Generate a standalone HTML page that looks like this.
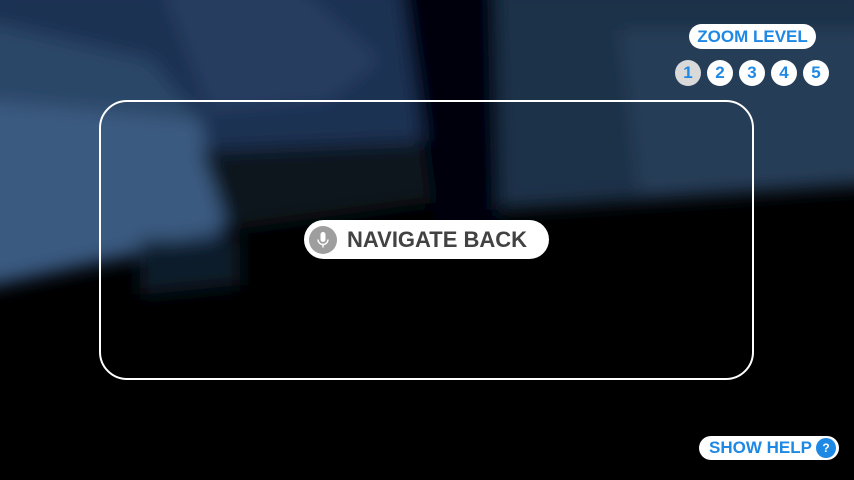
<!DOCTYPE html>
<html><head><style>
html,body{margin:0;padding:0;width:854px;height:480px;overflow:hidden;background:#000;font-family:"Liberation Sans",sans-serif}
.bg{position:absolute;left:0;top:0}
.pill{position:absolute;background:#fff;border-radius:14px;color:#1e88e5;font-weight:bold;box-sizing:border-box;white-space:nowrap}
.num{position:absolute;top:60px;width:26px;height:26px;border-radius:50%;background:#fff;color:#1e88e5;font-size:17px;line-height:26px;text-align:center;font-weight:bold}
</style></head><body>
<svg class="bg" width="854" height="480" viewBox="0 0 854 480">
<defs><filter id="b" x="-20%" y="-20%" width="140%" height="140%"><feGaussianBlur stdDeviation="9"/></filter></defs>
<rect width="854" height="480" fill="#000"/>
<g filter="url(#b)">
<polygon points="-20,-20 420,-20 430,140 260,160 220,240 -20,290" fill="#1d3352"/>
<polygon points="-20,90 200,120 225,230 -20,285" fill="#3a5a80"/>
<polygon points="-20,20 150,60 200,120 -20,100" fill="#2b4668"/>
<polygon points="160,-20 290,-20 380,60 330,100 210,110" fill="#253e60"/>
<polygon points="495,-20 874,-20 874,185 500,210" fill="#1f3149"/>
<polygon points="620,30 874,30 874,180 640,195" fill="#283c58"/>
<polygon points="200,150 440,140 450,200 230,230" fill="#0b121c"/>
<polygon points="400,-20 495,-20 500,230 440,260" fill="#03060a"/>
<polygon points="140,240 240,240 240,285 140,295" fill="#111c2a"/>
</g>
</svg>
<div class="pill" style="left:689px;top:24px;width:127px;height:25px;font-size:17px;line-height:25px;text-align:center">ZOOM LEVEL</div>
<div class="num" style="left:675px;background:#d9d9d9">1</div>
<div class="num" style="left:707px">2</div>
<div class="num" style="left:739px">3</div>
<div class="num" style="left:771px">4</div>
<div class="num" style="left:803px">5</div>
<div style="position:absolute;left:99px;top:100px;width:655px;height:280px;box-sizing:border-box;border:2px solid #fff;border-radius:28px"></div>
<div class="pill" style="left:304px;top:220px;width:245px;height:39px;border-radius:20px;color:#424242;font-size:22px;line-height:40px;padding-left:43px">NAVIGATE BACK</div>
<div style="position:absolute;left:309px;top:226px;width:28px;height:28px;border-radius:50%;background:#9e9e9e">
<svg width="28" height="28" viewBox="0 0 28 28"><rect x="11.5" y="6" width="5" height="10" rx="2.5" fill="#fff"/><path d="M9 13.5a5 5 0 0 0 10 0M14 18.5v3" stroke="#fff" stroke-width="1.4" fill="none"/></svg></div>
<div class="pill" style="left:699px;top:436px;width:140px;height:24px;border-radius:12px;font-size:17px;line-height:24px;padding-left:10px">SHOW HELP</div>
<div style="position:absolute;left:816px;top:438px;width:20px;height:20px;border-radius:50%;background:#1e88e5;color:#fff;font-size:12px;font-weight:bold;line-height:20px;text-align:center">?</div>
</body></html>
